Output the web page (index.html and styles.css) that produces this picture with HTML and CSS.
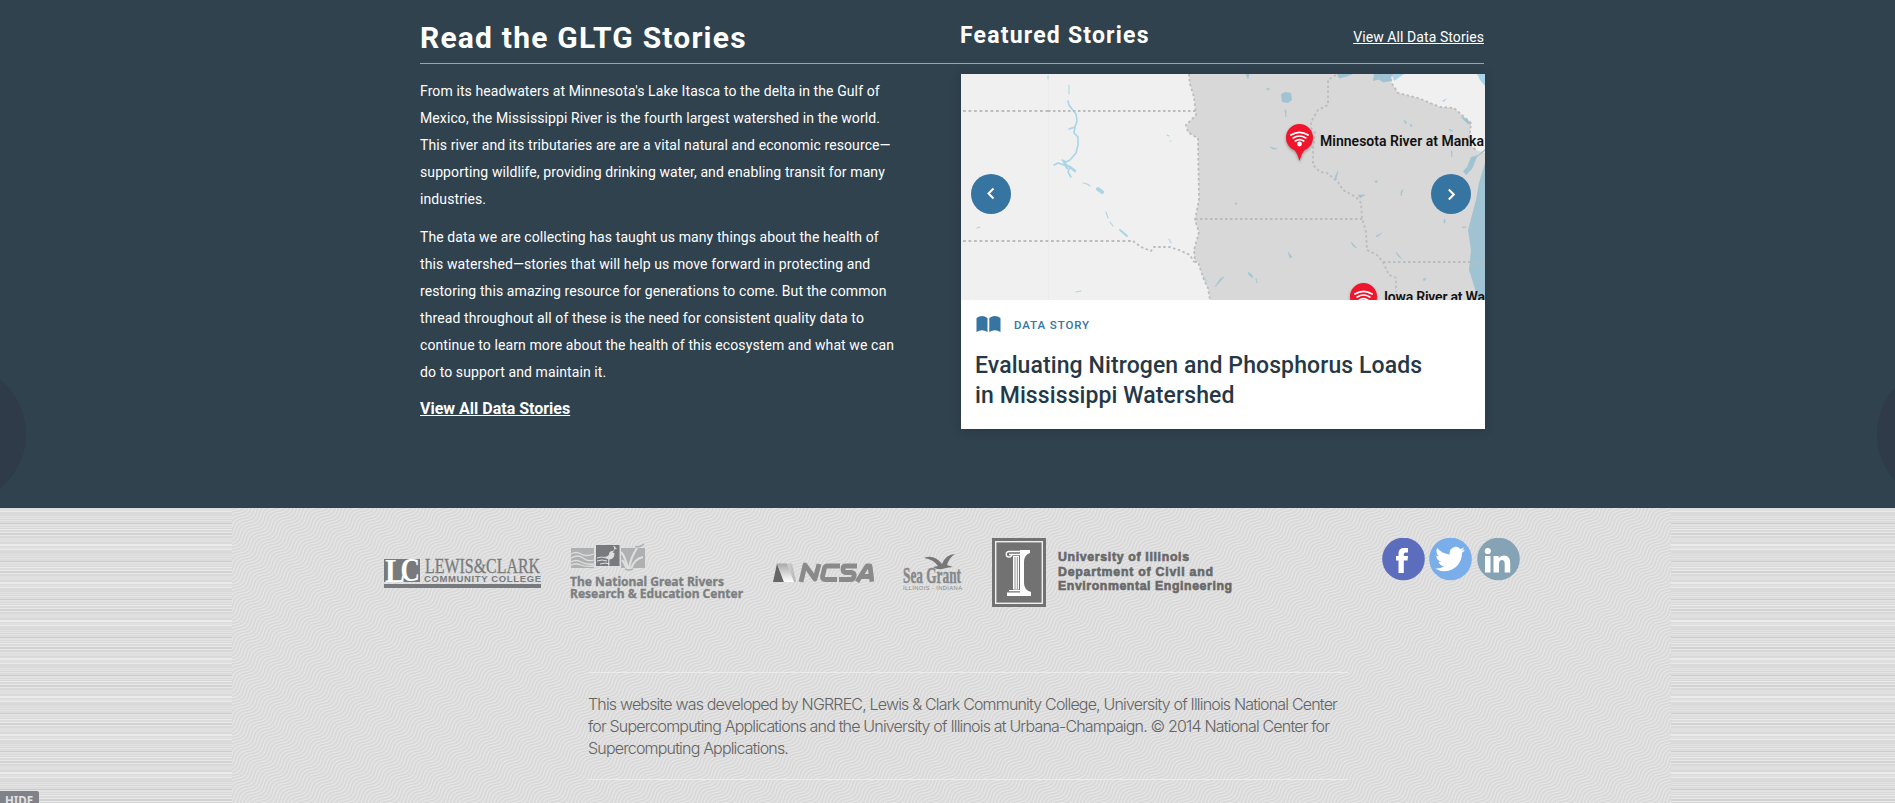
FILE: index.html
```html
<!DOCTYPE html>
<html lang="en">
<head>
<meta charset="utf-8">
<title>GLTG Stories</title>
<link rel="stylesheet" href="styles.css">
</head>
<body>
<section class="stories">
  <div class="side-circle side-circle-left"></div>
  <div class="side-circle side-circle-right"></div>
  <div class="container">
    <header class="stories-head">
      <h1>Read the GLTG Stories</h1>
      <div class="featured-head">
        <h2>Featured Stories</h2>
        <a class="view-all" href="#">View All Data Stories</a>
      </div>
    </header>
    <div class="stories-body">
      <div class="intro">
        <p>From its headwaters at Minnesota's Lake Itasca to the delta in the Gulf of<br>Mexico, the Mississippi River is the fourth largest watershed in the world.<br>This river and its tributaries are are a vital natural and economic resource—<br>supporting wildlife, providing drinking water, and enabling transit for many<br>industries.</p>
        <p>The data we are collecting has taught us many things about the health of<br>this watershed—stories that will help us move forward in protecting and<br>restoring this amazing resource for generations to come. But the common<br>thread throughout all of these is the need for consistent quality data to<br>continue to learn more about the health of this ecosystem and what we can<br>do to support and maintain it.</p>
        <a class="intro-link" href="#">View All Data Stories</a>
      </div>
      <article class="card">
        <div class="card-map">
          <svg class="map" width="524" height="226" viewBox="0 0 524 226">
            <defs>
              <filter id="soft" x="-30%" y="-30%" width="160%" height="170%"><feGaussianBlur stdDeviation="1.6"/></filter>
              <g id="pin">
                <path d="M0 0a13.5 13.5 0 0 1 13.5 13.5c0 6-3.500 10.500-8.500 12.800C3 28 1.500 32 0 37c-1.500-5-3-9-5-10.700-5-2.300-8.500-6.800-8.500-12.800A13.500 13.500 0 0 1 0 0z" fill="#555" opacity=".55" filter="url(#soft)" transform="translate(0 1.500)"/>
                <path d="M0 0a13.5 13.5 0 0 1 13.5 13.5c0 6-3.500 10.500-8.500 12.800C3 28 1.500 32 0 37c-1.500-5-3-9-5-10.700-5-2.300-8.500-6.800-8.500-12.800A13.500 13.500 0 0 1 0 0z" fill="#f0142d"/>
                <g fill="none" stroke="#fff" stroke-width="1.700" stroke-linecap="round">
                  <path d="M-8.600 11Q0 5.600 8.600 11M-6.300 14Q0 10 6.300 14M-4.200 17Q0 14.200 4.200 17"/>
                </g>
                <circle cx="0" cy="20" r="2.400" fill="#fff"/>
              </g>
            </defs>
            <rect width="524" height="226" fill="#f0f0f0"/>
            <path d="M87.500 0V226" stroke="#ebebeb"/>
            <path fill="#d8d8d8" d="M228 0L229 10 233 23 235 41 225 51 227 58 231 61 237 64 238 126 234 146 238 158 233 176 234 188 237 188 243 206 247 214 249 226H524V79L515 76 507 69 509 59 510 49 501 41 493 34 479 33 457 24 437 19 430 8 431 0Z"/>
            <g fill="#9fc3d2">
              <path d="M376 0h16l-6 2.500-8 2zM413 0h17v7l-8 1.500-4-3-6 1.500z"/>
              <path d="M320 20l4-2 6 1 1 7-4 3-6-1z"/>
              <path d="M524 89L518 109 515 126 507 156 510 176 508 196 515 218 517 226H524zM524 75l-7 6-7 2-4 10-4 4 3 4 6-6 5-12 8-6z"/>
              <path d="M500 43l6 2 4 5-3 0zM443 46l1.500 4 1-2zM449 50l2 1-1 2zM488 55l4 2-3 0zM285 0l3 0-1 5zM305 15l4-1-2 2zM324 36l1 7 0-7zM309 73l7 2-4 0zM377 97l-2 9-1-3zM414 107l3 0-2 2zM442 115l-2 7 0-4zM397 121l7 0-5 3zM483 146v3h1v-4zM501 153l4 0-2 1zM415 162l6-3-5 4zM390 168l6 6-4-2zM435 178l6 7-4-3zM462 205l3-1-2 3zM327 178l4 5-2 1zM287 198l4 3 1 3-4-3zM295 204l1 5-1-3zM263 203l-9 10 5-8zM274 129l2 0-1 2zM490 77l1 6 0-6z" stroke="#a4c6d4" stroke-width=".6"/>
            </g>
            <path d="M431 0h12l-10 7zM516 0h8v12l-5-6zM481 27l5-3-3 4z" fill="#a8d6e8"/>
            <g fill="none" stroke="#a9d5e7" stroke-linecap="round" stroke-linejoin="round">
              <path d="M108 11V20M87 2V5" stroke-width="1"/>
              <path d="M107 27L108 31 111 35 115 40 116 47 114 53 108 55 M114 53L113 59 117 63 117 71 115 79 109 86 105 88 101 86M104 90L109 93 107 98 110 103M103 91L97 89 93 91" stroke-width="1.600"/>
              <path d="M106 94l-3-6M109 93l5 4" stroke-width="2.600"/>
              <path d="M122 109l4 1 3 2M145 138l2 6M149 148l3 4M208 165l2 4M16 154l3-1M115 218l5-1M206 61l2 1M209 67h1M243 203l3 4" stroke-width="1.100"/>
              <path d="M159 156l7 6" stroke-width="2"/>
              <path d="M137 115l4 3" stroke-width="4"/>
            </g>
            <g fill="none" stroke="#bcbcbc" stroke-width="1.800" stroke-dasharray="2.500 2.500">
              <path stroke-width="2.200" stroke-dasharray="2.800 2.700" d="M2 37H87M2 167H172"/>
              <path d="M87 37H235M172 167L180 173 190 177 193 173H209L218 176 229 181 233 188M228 0L229 10 233 23 235 41 225 51 227 58 231 61 237 64 238 126 234 146 238 158 233 176 234 188 237 188 243 206 247 214 249 226M234 145H401M422 188H524"/>
              <path d="M375 1L367 6V31L357 36 350 48V54L354 59 352 73V91L359 98 366 99 377 108 382 116 395 123 400 129 401 144 403 151 405 158 406 176 416 181 422 188 428 201 435 204V218M431 0L430 8 437 19 457 24 479 33 493 34 501 41 510 49 509 59 507 69 515 76"/>
            </g>
            <use href="#pin" x="338.500" y="50"/>
            <use href="#pin" x="402.500" y="209"/>
            <g class="map-label">
              <text x="359" y="72" textLength="164">Minnesota River at Manka</text>
              <text x="423" y="228" textLength="101">Iowa River at Wa</text>
            </g>
          </svg>
          <button class="arrow arrow-prev" aria-label="Previous"><svg width="40" height="40" viewBox="0 0 40 40"><path d="M22.500 14.500L17.500 19.500L22.500 24.500"/></svg></button>
          <button class="arrow arrow-next" aria-label="Next"><svg width="40" height="40" viewBox="0 0 40 40"><path d="M17.800 15.500L22.800 20.500L17.800 25.500"/></svg></button>
        </div>
        <div class="card-body">
          <div class="card-tag">
            <svg width="25" height="16" viewBox="0 0 25 16" fill="#3674a1"><path d="M.5 2Q6-2 11.500 2V16Q6 12.400 .5 16zM13.300 2Q18.800-2 24.500 2V16Q18.800 12.400 13.300 16z"/></svg>
            <span>DATA STORY</span>
          </div>
          <h3>Evaluating Nitrogen and Phosphorus Loads<br>in Mississippi Watershed</h3>
        </div>
      </article>
    </div>
  </div>
</section>

<footer class="footer">
  <div class="footer-inner">
    <svg class="waves" width="1439" height="295">
      <defs>
        <path id="wave" fill="none" d="M-42 38c6.150-.9 9.050-3.400 10.500-9.500c1.450-6.100 4.350-8.600 10.500-9.500c6.150-.9 9.050-3.400 10.500-9.500c1.450-6.100 4.350-8.600 10.500-9.500c6.150-.9 9.050-3.400 10.500-9.500c1.450-6.100 4.350-8.600 10.500-9.500c6.150-.9 9.050-3.400 10.500-9.500c1.450-6.100 4.350-8.600 10.500-9.500"/>
        <g id="wave-pair"><use href="#wave" stroke="#e8e8e8"/><use href="#wave" x="1" y="1" stroke="#d3d3d3" stroke-width=".8"/></g>
        <g id="wave-band">
          <use href="#wave-pair"/>
          <use href="#wave-pair" x="2.625" y="2.375"/>
          <use href="#wave-pair" x="5.250" y="4.750"/>
          <use href="#wave-pair" x="7.875" y="7.125"/>
          <use href="#wave-pair" x="10.500" y="9.500"/>
          <use href="#wave-pair" x="13.125" y="11.875"/>
          <use href="#wave-pair" x="15.750" y="14.250"/>
          <use href="#wave-pair" x="18.375" y="16.625"/>
        </g>
        <pattern id="wave-tile" width="42" height="38" patternUnits="userSpaceOnUse">
          <rect width="42" height="38" fill="#dedede"/>
          <use href="#wave-band" x="-21" y="-19"/>
          <use href="#wave-band"/>
          <use href="#wave-band" x="21" y="19"/>
          <use href="#wave-band" x="42" y="38"/>
        </pattern>
      </defs>
      <rect width="1439" height="295" fill="url(#wave-tile)"/>
    </svg>
    <div class="logo-row">
      <svg class="logo-lc" width="157" height="70" viewBox="0 0 157 70">
        <rect y="21" width="36" height="23" fill="#777b7d"/>
        <g font-family="Liberation Serif, serif">
          <g font-size="34" font-weight="700" fill="#fff"><text x="1" y="43.500" textLength="20" lengthAdjust="spacingAndGlyphs">L</text><text x="16.500" y="43.300" textLength="19.500" lengthAdjust="spacingAndGlyphs">C</text></g>
          <text x="41" y="34.500" font-size="21" fill="#777b7d" stroke="#777b7d" stroke-width=".3" textLength="115" lengthAdjust="spacingAndGlyphs">LEWIS&amp;CLARK</text>
        </g>
        <text x="40" y="43.600" font-family="Liberation Sans, sans-serif" font-weight="700" font-size="9.500" fill="#777b7d" textLength="117">COMMUNITY COLLEGE</text>
        <rect y="46" width="157" height="4" fill="#777b7d"/>
      </svg>
      <svg class="logo-ngr" width="174" height="70" viewBox="0 0 174 70">
        <rect x="1" y="10" width="23" height="20" fill="#aeb0b1"/>
        <rect x="26" y="7" width="23.500" height="21" fill="#777b7d"/>
        <rect x="51" y="10" width="24" height="20" fill="#aeb0b1"/>
        <g fill="none" stroke="#dedede" stroke-width="1.300"><path d="M1 16q5-3 10 0t13 0M1 20q7-4 12 0t11 2M1 24q5-3 10 0t13 2M1 27q5-2 10 0t13 1"/><path d="M27 20q5-2 9 0t6 0M27 23q5-2 10 0M30 26q5-2 10 0" stroke-width="1"/></g>
        <path d="M43 8q3 0 2.500 2l2 1-3 .2q0 2-2 3l2 1q0 6-5 6l-.5 6.500h-1l.3-7q-3-1-4-2 5 0 5-4 1-2 4-2 2-2-.3-4.700z" fill="#dedede"/>
        <path d="M51 14q4 4 7 17M59 31q1-10 8-21M61 31q3-10 12-12M57 31q-3-7-5-9" fill="none" stroke="#dedede" stroke-width="2.200"/><path d="M65 9q6 0 9-3M55 31q4 2 8 0" fill="none" stroke="#aeb0b1" stroke-width="1.500"/>
        <g font-family="Noto Sans, sans-serif" font-weight="700" font-size="11.800" fill="#7b7f81" stroke="#7b7f81" stroke-width=".3">
          <text x="0" y="48" textLength="154" lengthAdjust="spacingAndGlyphs">The National Great Rivers</text>
          <text x="0" y="59.600" textLength="173" lengthAdjust="spacingAndGlyphs">Research &amp; Education Center</text>
        </g>
      </svg>
      <svg class="logo-ncsa" width="101" height="70" viewBox="0 0 101 70">
        <defs><linearGradient id="ncsa-a" x2="0" y2="1"><stop stop-color="#a8a8a8"/><stop offset="1" stop-color="#fff"/></linearGradient><linearGradient id="ncsa-b"><stop stop-color="#c9c9c9"/><stop offset="1" stop-color="#999"/></linearGradient></defs>
        <path d="M0 44L4 25.500 11 44z" fill="#666"/><path d="M4 25.500H14L21 44H11z" fill="url(#ncsa-a)"/><path d="M14 25.500H19L23 44H21z" fill="url(#ncsa-b)" opacity=".6"/>
        <g fill="none" stroke="#8a8a8a" stroke-width="4.800" stroke-linejoin="round">
          <path d="M28 44L32 27L42 41L46 26"/><path d="M67 28H55Q52 28 51.500 30L49.500 38.500Q49 41.500 52 41.500H64"/><path d="M84 28H73Q70 28 70 31T72 34.500H79Q82 35 81 38.500T77 41.500H66"/><path d="M84 43.800L94 28H97L99 43.800M88 38.500H97"/>
        </g>
      </svg>
      <svg class="logo-sea" width="60" height="70" viewBox="0 0 60 70">
        <g fill="#858788"><text x="0" y="44.700" font-family="Liberation Serif, serif" font-weight="700" font-size="24" stroke="#858788" stroke-width=".4" textLength="58" lengthAdjust="spacingAndGlyphs">Sea Grant</text>
        <text x="0" y="51.800" font-family="Liberation Sans, sans-serif" font-size="5.800" textLength="59">ILLINOIS - INDIANA</text></g>
        <path d="M21 20Q31 16 39 26Q43 16 52 16Q46 20 44 27L50 29Q44 29.500 39 31Q34 32 30 29L35 28Q30 21 21 20z" fill="#777"/>
      </svg>
      <svg class="logo-uiuc" width="241" height="70" viewBox="0 0 241 70">
        <rect width="54" height="69" fill="#727272"/><rect x="3.700" y="3.700" width="46.600" height="61.600" fill="none" stroke="#f0f0f0" stroke-width="1.400"/>
        <path d="M28 12H38V15Q32 17 32 24V45Q32 52 39 54V58H15V54.500H28z" fill="#fff"/>
        <path d="M21 18H27V51.500H21z" fill="#fff"/><path d="M23 19V51M25.300 19V51" stroke="#777" stroke-width=".8"/>
        <path d="M28 13.500H17a2.800 2.800 0 1 0 2.800 2.800M17 16.500h11M17 52.600h11" fill="none" stroke="#fff" stroke-width="1.300"/>
        <g font-family="Liberation Sans, sans-serif" font-weight="700" font-size="12.300" fill="#686868" stroke="#686868" stroke-width=".6">
          <text x="66" y="23" textLength="131">University of Illinois</text><text x="66" y="38" textLength="155">Department of Civil and</text><text x="66" y="52" textLength="174">Environmental Engineering</text>
        </g>
      </svg>
      <div class="social">
        <svg width="43" height="43" viewBox="0 0 43 43"><circle cx="21.500" cy="21" r="21.300" fill="#5c6dbd"/><path d="M16.500 35V22.500H14V18h2.500v-2.500q0-5.500 5.500-5.500h4v4.500h-2.500q-1.700 0-1.700 1.800V18H26l-.5 4.500h-3.700V35z" fill="#fff"/></svg>
        <svg width="43" height="43" viewBox="0 0 43 43"><circle cx="21.500" cy="21" r="21.300" fill="#7aaeea"/><path transform="translate(6.200 6.200) scale(1.240)" d="M23.950 4.570a10 10 0 0 1-2.820.77 4.960 4.960 0 0 0 2.160-2.720 9.900 9.900 0 0 1-3.120 1.190 4.920 4.920 0 0 0-8.380 4.480C7.690 8.090 4.070 6.130 1.640 3.160a4.920 4.920 0 0 0 1.520 6.570 4.900 4.900 0 0 1-2.230-.61v.06a4.920 4.920 0 0 0 3.950 4.830 5 5 0 0 1-2.210.08 4.940 4.940 0 0 0 4.600 3.420A9.870 9.870 0 0 1 0 19.540a14 14 0 0 0 7.550 2.210c9.050 0 14-7.500 14-13.980 0-.21 0-.42-.02-.63a9.940 9.940 0 0 0 2.420-2.570z" fill="#fff"/></svg>
        <svg width="43" height="43" viewBox="0 0 43 43"><circle cx="21.500" cy="21" r="21.300" fill="#86a3b6"/><path d="M8 18h5.500v16.500H8zM16.500 18h5.200v2.300q1.700-2.800 5.200-2.800 6.300 0 6.300 7.500v9.500h-5.500V26q0-4-2.700-4-3 0-3 4v8.500h-5.500z" fill="#fff"/><circle cx="10.800" cy="13" r="3.100" fill="#fff"/></svg>
      </div>
    </div>
    <p class="credits">This website was developed by NGRREC, Lewis &amp; Clark Community College, University of Illinois National Center<br>for Supercomputing Applications and the University of Illinois at Urbana-Champaign. © 2014 National Center for<br>Supercomputing Applications.</p>
  </div>
</footer>
<div class="hide-tab">HIDE</div>
</body>
</html>
```
FILE: styles.css
```css
* { box-sizing: border-box; }
body {
  margin: 0;
  height: 803px;
  overflow: hidden;
  position: relative;
  font-family: Roboto, "Liberation Sans", sans-serif;
}
h1, h2, h3, p { margin: 0; }
a { color: inherit; }

.stories {
  height: 508px;
  position: relative;
  overflow: hidden;
  background: #30424e;
  color: #fff;
}
.side-circle {
  position: absolute;
  top: 364px;
  width: 140px;
  height: 140px;
  border-radius: 50%;
  background: #2f3b48;
}
.side-circle-left { left: -114px; }
.side-circle-right { right: -122px; }
.container { width: 1064px; margin-left: 420px; position: relative; }
.stories-head {
  height: 64px;
  display: grid;
  grid-template-columns: 540px 524px;
  border-bottom: 1px solid #8aa9bf;
}
h1 {
  padding-top: 20px;
  font-size: 30px;
  line-height: 36px;
  font-weight: 700;
  letter-spacing: 1.2px;
  white-space: nowrap;
}
.featured-head {
  display: flex;
  justify-content: space-between;
  align-items: flex-start;
}
h2 {
  padding-top: 22px;
  font-size: 23px;
  line-height: 28px;
  font-weight: 700;
  letter-spacing: 1.2px;
}
.view-all { padding-top: 28px; font-size: 14px; line-height: 18px; letter-spacing: .08px; }
.stories-body {
  display: grid;
  grid-template-columns: 541px 524px;
  align-items: start;
}
.intro { padding-top: 14px; }
.intro p {
  margin-bottom: 10.500px;
  font-size: 14px;
  line-height: 27px;
  letter-spacing: .1px;
  white-space: nowrap;
}
.intro-link { display: block; padding-top: 2px; font-size: 16px; line-height: 22px; font-weight: 700; }

.card {
  margin-top: 10px;
  height: 355px;
  background: #fff;
  color: #263846;
  box-shadow: 0 1px 8px rgba(35, 35, 55, .4);
}
.card-map { height: 226px; position: relative; }
.map { display: block; }
.map-label { font: 600 14px Roboto, sans-serif; fill: #111; }
.arrow {
  position: absolute;
  top: 100px;
  width: 40px;
  height: 40px;
  padding: 0;
  border: 0;
  border-radius: 50%;
  background: #3674a1;
}
.arrow svg { display: block; fill: none; stroke: #fff; stroke-width: 2; }
.arrow-prev { left: 10px; }
.arrow-next { right: 14px; }
.card-body { padding: 16px 15px 0; }
.card-tag {
  height: 16px;
  display: flex;
  align-items: center;
  gap: 13px;
  font-size: 11.500px;
  line-height: 16px;
  font-weight: 500;
  letter-spacing: .9px;
  color: #3674a1;
}
.card-tag span { padding-top: 2px; }
h3 {
  margin: 19px 0 0 -1px;
  font-size: 23px;
  line-height: 30px;
  font-weight: 500;
  letter-spacing: .1px;
  white-space: nowrap;
}

.footer {
  height: 295px;
  background: repeating-linear-gradient(180deg,
    #dcdcdc 0 1px, #e0e0e0 1px 3px, #eaeaea 3px 4px, #dadada 4px 8px,
    #e1e1e1 8px 9px, #dadada 9px 10px, #e4e4e4 10px 11px, #d8d8d8 11px 12px,
    #e4e4e4 12px 13px, #dcdcdc 13px 15px, #cccccc 15px 16px, #e2e2e2 16px 18px,
    #d9d9d9 18px 19px, #e4e4e4 19px 20px, #d8d8d8 20px 21px, #ebebeb 21px 22px,
    #dadada 22px 24px, #e9e9e9 24px 25px, #d2d2d2 25px 27px, #e7e7e7 27px 28px,
    #d8d8d8 28px 30px, #e0e0e0 30px 34px, #d9d9d9 34px 36px, #ebebeb 36px 38px);
}
.footer-inner {
  width: 1439px;
  height: 295px;
  margin-left: 232px;
  position: relative;
}
.waves { position: absolute; inset: 0; }
.logo-row {
  position: relative;
  display: flex;
  padding: 30px 0 0 152px;
}
.logo-ngr { margin-left: 29px; }
.logo-ncsa { margin-left: 29px; }
.logo-sea { margin-left: 29px; }
.logo-uiuc { margin-left: 29px; }
.social { display: flex; gap: 4.400px; margin-left: 149px; }
.credits {
  position: relative;
  width: 760px;
  margin: 64px 0 0 356px;
  padding: 20px 0;
  border: solid #ececec;
  border-width: 1px 0;
  font-family: Inter, "Liberation Sans", sans-serif;
  font-weight: 300;
  font-size: 16px;
  line-height: 22px;
  letter-spacing: -.82px;
  color: #636363;
  white-space: nowrap;
}
.hide-tab {
  position: absolute;
  left: 0;
  bottom: 0;
  width: 39px;
  height: 12px;
  padding: 2px 0 0 5px;
  overflow: hidden;
  border-top-right-radius: 2px;
  background: #808289;
  color: #e3e3e3;
  font: 700 11.500px/16px "Noto Sans", sans-serif;
  letter-spacing: 0;
}
```
